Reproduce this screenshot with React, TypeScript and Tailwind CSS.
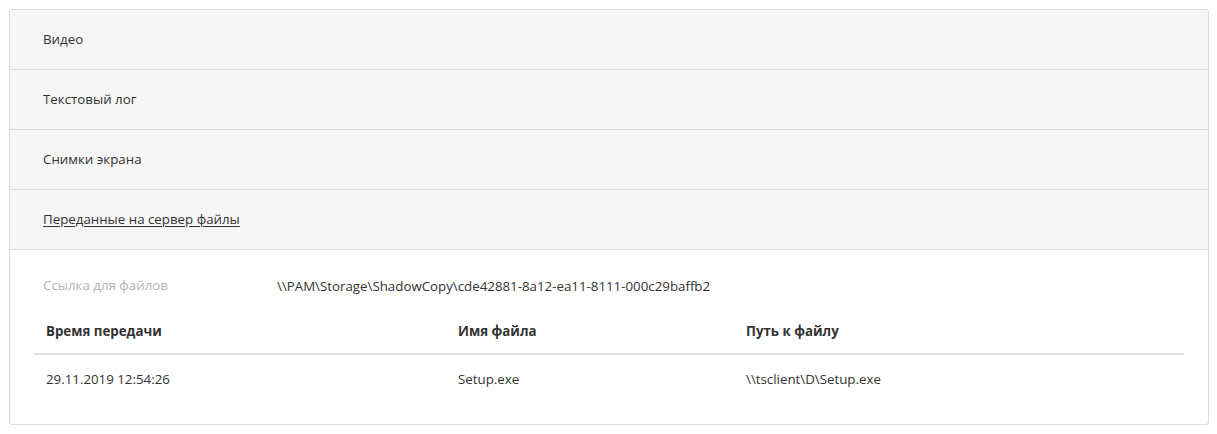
export default function App() {
  const sections = ["Видео", "Текстовый лог", "Снимки экрана"];
  const files = [{ time: "29.11.2019 12:54:26", name: "Setup.exe", path: "\\\\tsclient\\D\\Setup.exe" }];

  return (
    <div className="min-h-screen bg-white p-[9px] text-[13.3px] text-[#333]" style={{ fontFamily: '"Open Sans", "Noto Sans", sans-serif' }}>
      <div className="w-[1200px] rounded-[3px] border border-[#dcdcdc] bg-white">
        {sections.map((s) => (
          <div key={s} className="flex h-[60px] items-center border-b border-[#dcdcdc] bg-[#f6f6f6] pl-[33px]">
            {s}
          </div>
        ))}
        <div className="flex h-[60px] items-center border-b border-[#dcdcdc] bg-[#f6f6f6] pl-[33px]">
          <a href="#" className="text-[#333] underline underline-offset-2">Переданные на сервер файлы</a>
        </div>

        {/* Files panel */}
        <div className="px-[24px] pt-[24px] pb-[22px]">
          <div className="flex items-center pl-[9px]">
            <span className="w-[234px] text-[#b4b4b4]">Ссылка для файлов</span>
            <span className="mt-[3px]">\\PAM\Storage\ShadowCopy\cde42881-8a12-ea11-8111-000c29baffb2</span>
          </div>
          <table className="mt-[13px] w-[1150px] border-collapse text-left">
            <thead>
              <tr className="border-b-2 border-[#dee2e6]">
                <th className="w-[412px] px-[12px] pt-[12px] pb-[11px] font-bold">Время передачи</th>
                <th className="w-[288px] px-[12px] pt-[12px] pb-[11px] font-bold">Имя файла</th>
                <th className="px-[12px] pt-[12px] pb-[11px] font-bold">Путь к файлу</th>
              </tr>
            </thead>
            <tbody>
              {files.map((f) => (
                <tr key={f.time}>
                  <td className="px-[12px] pt-[15px] pb-[12px]">{f.time}</td>
                  <td className="px-[12px] pt-[15px] pb-[12px]">{f.name}</td>
                  <td className="px-[12px] pt-[15px] pb-[12px]">{f.path}</td>
                </tr>
              ))}
            </tbody>
          </table>
        </div>
      </div>
    </div>
  );
}
